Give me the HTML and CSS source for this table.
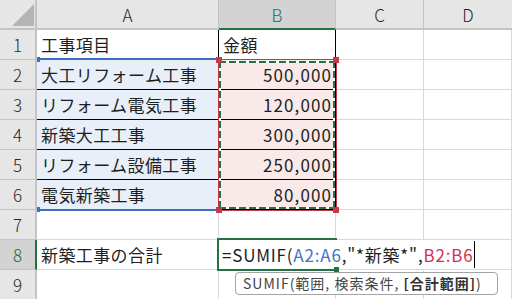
FILE: index.html
```html
<!DOCTYPE html>
<html lang="ja">
<head>
<meta charset="utf-8">
<title>SUMIF</title>
<link rel="stylesheet" href="styles.css">
</head>
<body>
<div class="sheet">
  <div class="hd corner"><span class="tri"></span></div>
  <div class="hd col">A</div>
  <div class="hd col sel-col">B</div>
  <div class="hd col">C</div>
  <div class="hd col last">D</div>

  <div class="hd row">1</div>
  <div class="c tr">工事項目</div>
  <div class="c tr tl">金額</div>
  <div class="c"></div>
  <div class="c"></div>

  <div class="hd row">2</div>
  <div class="c tr tb fa">大工リフォーム工事</div>
  <div class="c tr tb fb num">500,000</div>
  <div class="c"></div>
  <div class="c"></div>

  <div class="hd row">3</div>
  <div class="c tr tb fa">リフォーム電気工事</div>
  <div class="c tr tb fb num">120,000</div>
  <div class="c"></div>
  <div class="c"></div>

  <div class="hd row">4</div>
  <div class="c tr tb fa">新築大工工事</div>
  <div class="c tr tb fb num">300,000</div>
  <div class="c"></div>
  <div class="c"></div>

  <div class="hd row">5</div>
  <div class="c tr tb fa">リフォーム設備工事</div>
  <div class="c tr tb fb num">250,000</div>
  <div class="c"></div>
  <div class="c"></div>

  <div class="hd row">6</div>
  <div class="c tr tb fa">電気新築工事</div>
  <div class="c tr tb fb num">80,000</div>
  <div class="c"></div>
  <div class="c"></div>

  <div class="hd row">7</div>
  <div class="c"></div>
  <div class="c"></div>
  <div class="c"></div>
  <div class="c"></div>

  <div class="hd row sel-row">8</div>
  <div class="c">新築工事の合計</div>
  <div class="c"></div>
  <div class="c"></div>
  <div class="c"></div>

  <div class="hd row">9</div>
  <div class="c"></div>
  <div class="c"></div>
  <div class="c"></div>
  <div class="c"></div>

  <div class="ref-a"><span class="hdl h-tl"></span><span class="hdl h-bl"></span></div>
  <div class="ref-b">
    <div class="ants"></div>
    <span class="sq s-tl"></span><span class="sq s-tr"></span>
    <span class="sq s-bl"></span><span class="sq s-br"></span>
  </div>

  <div class="edit"><span class="txt">=SUMIF(<span class="ca">A2:A6</span>,"*新築*",<span class="cb">B2:B6</span></span><span class="caret"></span></div>
  <div class="active"><span class="fill"></span></div>

  <div class="tip">SUMIF(範囲, 検索条件, <b>[合計範囲]</b>)</div>
</div>
</body>
</html>
```
FILE: styles.css
```css
* { box-sizing: border-box; }
html, body { margin: 0; padding: 0; background: #fff; }
body { width: 512px; height: 299px; overflow: hidden; }

.sheet {
  position: relative;
  display: grid;
  grid-template-columns: 37px 182px 117px 88px 1fr;
  grid-template-rows: repeat(10, 30px);
  font-family: "Noto Sans CJK JP", "Noto Sans", sans-serif;
  font-size: 17px;
  color: #1f1f1f;
}

.hd {
  background: #e6e6e6;
  border-right: 1px solid #c4c4c4;
  border-bottom: 1px solid #c4c4c4;
  display: flex;
  align-items: center;
  justify-content: center;
  color: #262626;
  font-size: 17px;
  font-weight: 300;
}
.hd.last { border-right: none; }
.corner { position: relative; border-right: 2px solid #c4c4c4; border-bottom: 2px solid #c4c4c4; }
.tri {
  position: absolute;
  left: 12px; top: 4px;
  width: 22px; height: 22px;
  background: #b5b5b5;
  clip-path: polygon(100% 0, 100% 100%, 0 100%);
}
.col { padding-top: 1px; border-bottom: 2px solid #c4c4c4; }
.sel-col {
  background: #d3d3d3;
  border-bottom: 2px solid #217346;
  color: #1c6b3f;
}
.row { border-right: 2px solid #c4c4c4; }
.sel-row {
  background: #d3d3d3;
  border-right: 2px solid #217346;
  color: #1c6b3f;
}

.c {
  border-right: 1px solid #d9d9d9;
  border-bottom: 1px solid #d9d9d9;
  display: flex;
  align-items: center;
  padding: 0 4px;
  white-space: nowrap;
  overflow: hidden;
  letter-spacing: 0.4px;
}
.tr { border-right-color: #000; }
.tl { margin-left: -1px; border-left: 1px solid #000; }
.tb { border-bottom-color: #000; }
.fa { background: #e9eff9; }
.fb { background: #f9e9e9; }
.num { justify-content: flex-end; padding-right: 3px; letter-spacing: 1.1px; }

.ref-a {
  position: absolute;
  left: 37px; top: 58px;
  width: 181px; height: 153px;
  border-top: 2px solid #3d6fc4;
  border-bottom: 2px solid #3d6fc4;
}
.hdl { position: absolute; width: 3px; height: 5px; background: #3d6fc4; left: 0; }
.h-tl { top: -3px; }
.h-bl { bottom: -3px; }

.ref-b {
  position: absolute;
  left: 218px; top: 59px;
  width: 119px; height: 152px;
  border: 1px solid #c6394b;
}
.ants {
  position: absolute;
  inset: 1px 1px 1px 0;
  background:
    repeating-linear-gradient(90deg, #217346 0 7px, #fff 7px 10px) left top / 100% 2px no-repeat,
    repeating-linear-gradient(90deg, #217346 0 7px, #fff 7px 10px) left bottom / 100% 2px no-repeat,
    repeating-linear-gradient(180deg, #217346 0 7px, #fff 7px 10px) left top / 2px 100% no-repeat,
    repeating-linear-gradient(180deg, #217346 0 7px, #fff 7px 10px) right top / 2px 100% no-repeat;
}
.sq { position: absolute; width: 6px; height: 6px; background: #c6394b; }
.s-tl { left: -3px; top: -3px; }
.s-tr { right: -3px; top: -3px; }
.s-bl { left: -3px; bottom: -3px; }
.s-br { right: -3px; bottom: -3px; }

.edit {
  position: absolute;
  left: 219px; top: 240px;
  width: 262px; height: 29px;
  background: #fff;
  display: flex;
  align-items: center;
  padding-left: 3px;
  white-space: nowrap;
  letter-spacing: 0.8px;
}
.ca { color: #4472c4; }
.cb { color: #d1334f; }
.caret { display: inline-block; width: 1px; height: 27px; background: #000; margin-left: 1px; }

.active {
  position: absolute;
  left: 217px; top: 238px;
  width: 120px; height: 33px;
  border: 2px solid #217346;
  border-right: none;
}
.fill {
  position: absolute;
  right: -2px; bottom: -3px;
  width: 5px; height: 5px;
  background: #217346;
}

.tip {
  position: absolute;
  left: 235px; top: 272px;
  width: 263px; height: 23px;
  border: 1px solid #a3a3a3;
  border-radius: 4px;
  background: #fff;
  color: #444;
  font-size: 14px;
  line-height: 21px;
  padding-left: 7px;
  white-space: nowrap;
  letter-spacing: 1px;
}
.tip b { color: #333; }
```
